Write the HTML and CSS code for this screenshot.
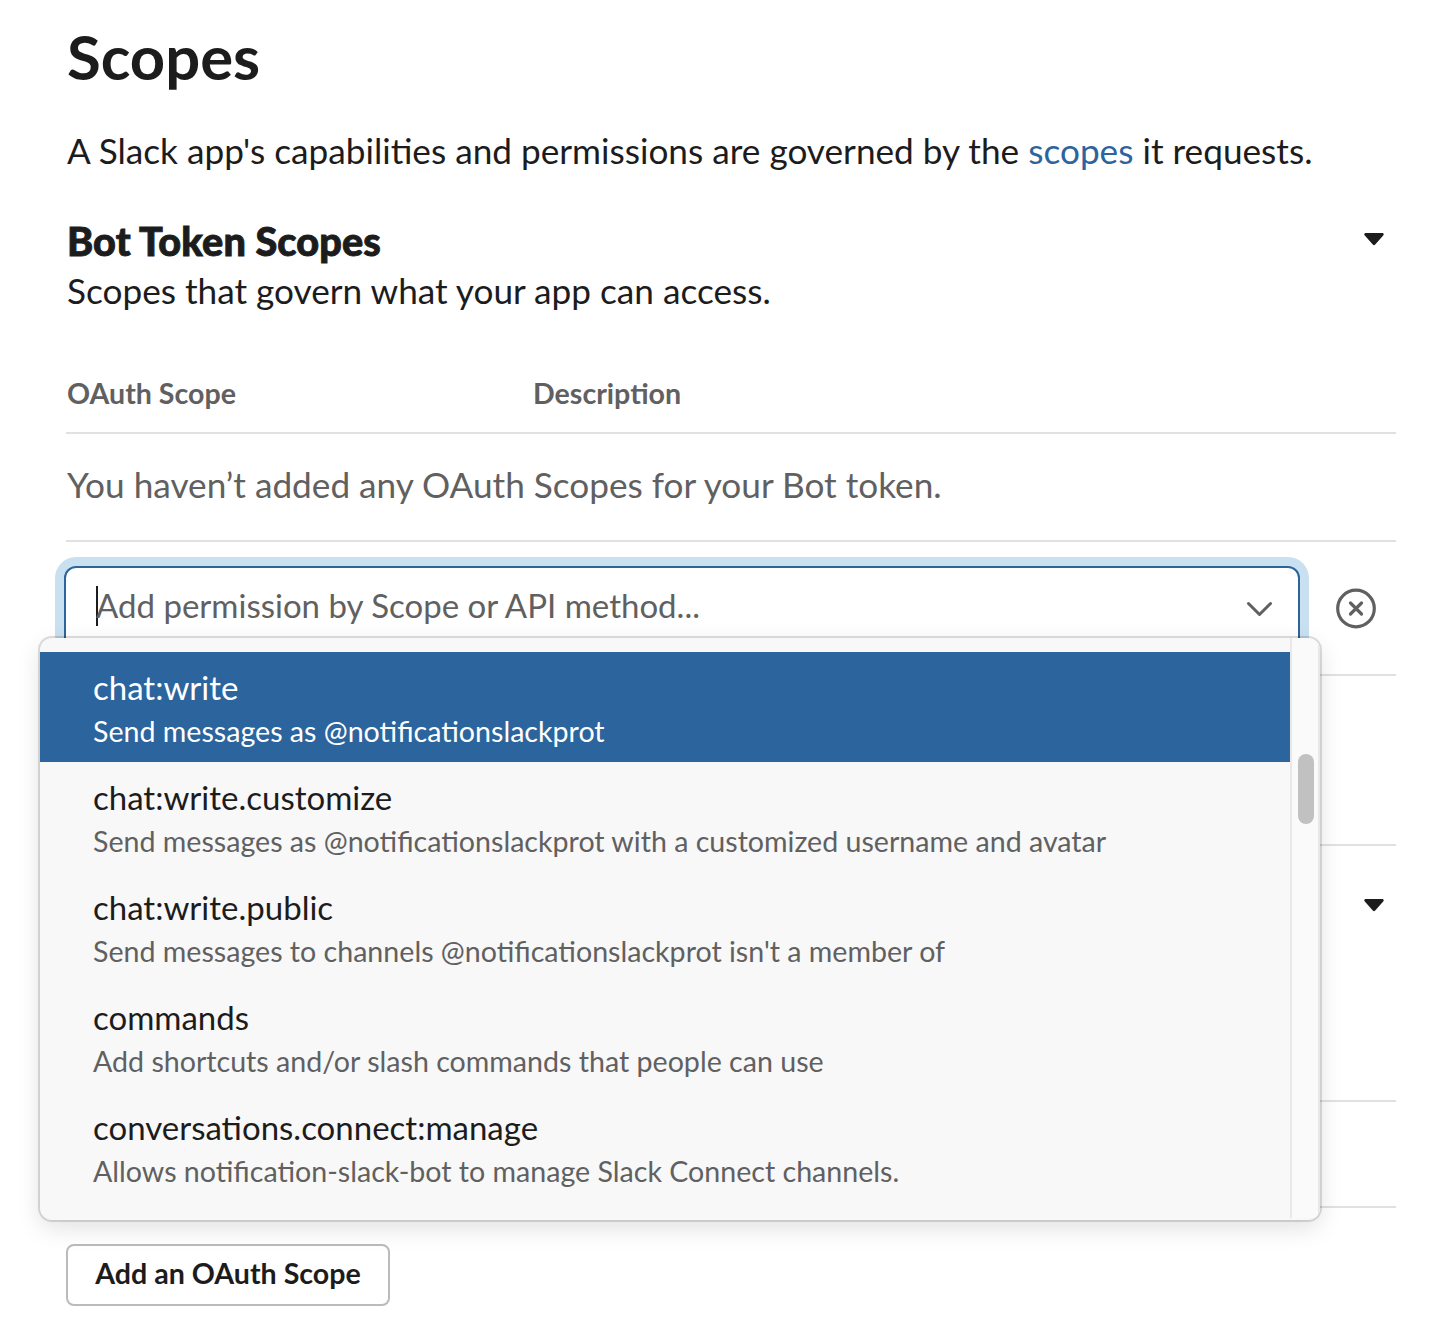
FILE: index.html
```html
<!DOCTYPE html>
<html lang="en">
<head>
<meta charset="utf-8">
<title>Scopes</title>
<link rel="stylesheet" href="styles.css">
</head>
<body>
<main class="page">
  <h1 class="title">Scopes</h1>
  <p class="intro">A Slack app's capabilities and permissions are governed by the <a class="link" href="#">scopes</a> it requests.</p>

  <section class="section">
    <header class="section-head">
      <h2 class="section-title">Bot Token Scopes</h2>
      <svg class="arrow" width="20" height="13" viewBox="0 0 20 13"><path d="M2 0h16c1.700 0 2.300 1.400 1.200 2.600l-8 9c-.8.800-1.600.800-2.400 0l-8-9C-.3 1.400.3 0 2 0z"/></svg>
    </header>
    <p class="section-sub">Scopes that govern what your app can access.</p>
  </section>

  <div class="table">
    <div class="table-head"><span>OAuth Scope</span><span>Description</span></div>
    <div class="table-empty">You haven’t added any OAuth Scopes for your Bot token.</div>
    <div class="table-edit">
      <div class="select">
        <span class="caret"></span>
        <span class="placeholder">Add permission by Scope or API method...</span>
        <svg class="chevron" width="26" height="16" viewBox="0 0 26 16"><path d="M2.500 2.500l11 11L24.500 2.500"/></svg>
        <div class="menu">
          <ul class="options">
            <li class="option selected"><span class="name">chat:write</span><span class="desc">Send messages as @notificationslackprot</span></li>
            <li class="option"><span class="name">chat:write.customize</span><span class="desc">Send messages as @notificationslackprot with a customized username and avatar</span></li>
            <li class="option"><span class="name">chat:write.public</span><span class="desc">Send messages to channels @notificationslackprot isn't a member of</span></li>
            <li class="option"><span class="name">commands</span><span class="desc">Add shortcuts and/or slash commands that people can use</span></li>
            <li class="option"><span class="name">conversations.connect:manage</span><span class="desc">Allows notification-slack-bot to manage Slack Connect channels.</span></li>
          </ul>
          <div class="track"><div class="thumb"></div></div>
        </div>
      </div>
      <svg class="remove" width="40" height="41" viewBox="0 0 40 41"><circle cx="20" cy="20.500" r="18.300"/><path d="M14.500 15l11 11M25.500 15l-11 11"/></svg>
    </div>
  </div>

  <div class="gap-row"></div>
  <section class="user-scopes">
    <svg class="arrow" width="20" height="13" viewBox="0 0 20 13"><path d="M2 0h16c1.700 0 2.300 1.400 1.200 2.600l-8 9c-.8.800-1.600.800-2.400 0l-8-9C-.3 1.400.3 0 2 0z"/></svg>
  </section>
  <div class="user-row"></div>
  <button class="button">Add an OAuth Scope</button>
</main>
</body>
</html>
```

FILE: styles.css
```css
* { box-sizing: border-box; }

body {
  margin: 0;
  background: #fff;
  color: #1d1c1d;
  font-family: Lato, sans-serif;
  font-size: 35.2px;
  line-height: 48px;
}

h1, h2, p, ul { margin: 0; padding: 0; }

.page {
  height: 1326px;
  padding: 20px 56px 0 66px;
  overflow: hidden;
  white-space: nowrap;
}

.title, .intro, .section-title, .section-sub { padding-left: 1px; }
.title { font-size: 61.6px; font-weight: 700; line-height: 72px; }
.intro { margin-top: 34px; }
.link { color: #2c649d; text-decoration: none; }

.section { margin-top: 41px; }
.section-head { display: flex; justify-content: space-between; height: 51px; }
.section-title {
  font-size: 39.6px;
  font-weight: 900;
  line-height: 51px;
  letter-spacing: .12px;
  -webkit-text-stroke: .9px #1d1c1d;
}
.arrow { display: block; margin: 18px 12px 0 0; fill: #1d1c1d; }

.table { margin-top: 58px; }
.table-head {
  display: grid;
  grid-template-columns: 466px 1fr;
  height: 62px;
  padding-left: 1px;
  border-bottom: 2px solid #e1e1e1;
  color: #616061;
  font-size: 28.6px;
  font-weight: 700;
  line-height: 42px;
}
.table-empty {
  height: 108px;
  padding: 26px 0 0 1px;
  border-bottom: 2px solid #e1e1e1;
  color: #616061;
}
.table-edit {
  display: flex;
  align-items: flex-start;
  height: 134px;
  padding-top: 24px;
  border-bottom: 2px solid #e1e1e1;
}

.select {
  position: relative;
  display: flex;
  align-items: center;
  width: 1236px;
  height: 84px;
  margin-left: -2px;
  padding: 0 26px 0 30px;
  border: 2px solid #2c649d;
  border-radius: 12px;
  box-shadow: 0 0 0 9px #c8e0f0;
  background: #fff;
}
.caret { width: 2px; height: 40px; margin: -4px -2px 0 0; background: #1d1c1d; }
.placeholder { flex: 1; margin-top: -6px; color: #616061; font-size: 33px; }
.chevron { margin-top: 2px; fill: none; stroke: #616061; stroke-width: 3; stroke-linecap: round; stroke-linejoin: round; }
.remove { margin: 22px 0 0 36px; fill: none; stroke: #616061; stroke-width: 3.2; stroke-linecap: round; }

.menu {
  position: absolute;
  top: 70px;
  left: -26px;
  display: flex;
  width: 1280px;
  height: 582px;
  overflow: hidden;
  border-radius: 12px;
  background: #f8f8f8;
  box-shadow: 0 0 0 2px rgba(0, 0, 0, .13), 0 8px 24px rgba(0, 0, 0, .12);
}
.options { flex: 1; padding-top: 14px; list-style: none; }
.option { display: flex; flex-direction: column; height: 110px; padding: 12px 0 0 53px; }
.name { font-size: 33px; line-height: 46px; }
.desc { margin-top: 1px; color: #616061; font-size: 28.6px; line-height: 40px; }
.selected, .selected .desc { background: #2c649d; color: #fff; }
.track {
  width: 30px;
  height: 580px;
  padding: 116px 0 0 6px;
  border: solid #e8e8e8;
  border-width: 0 2px;
  background: #fafafa;
}
.thumb { width: 16px; height: 70px; border-radius: 8px; background: #c1c1c1; }

.gap-row { height: 170px; border-bottom: 2px solid #e1e1e1; }
.user-scopes {
  display: flex;
  justify-content: flex-end;
  height: 256px;
  padding-top: 35px;
  border-bottom: 2px solid #e1e1e1;
}
.user-row { height: 106px; border-bottom: 2px solid #e1e1e1; }

.button {
  display: block;
  width: 324px;
  height: 62px;
  margin-top: 36px;
  padding: 0 0 4px;
  border: 2px solid #bbb;
  border-radius: 8px;
  background: #fff;
  color: #1d1c1d;
  font: 700 28.6px/40px Lato, sans-serif;
}
```
